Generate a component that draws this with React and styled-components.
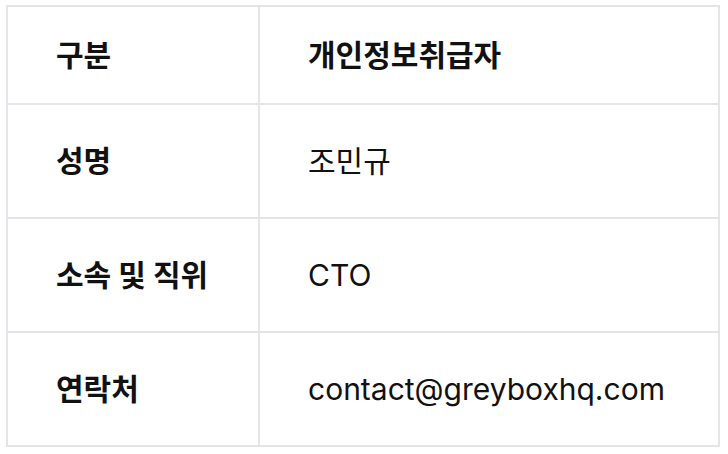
import React from "react";
import styled, { createGlobalStyle } from "styled-components";

const Global = createGlobalStyle`
  html, body { margin: 0; padding: 0; background: #ffffff; }
  body { font-family: Inter, "Noto Sans CJK KR", sans-serif; color: #111111; }
`;

const Page = styled.div`
  padding: 5px 0 0 6px;
`;

const Table = styled.table`
  border-collapse: collapse;
  width: 714px;
  table-layout: fixed;
  border: 2px solid #e4e4e9;
`;

const Col = styled.col`
  width: ${(p) => p.$w || "auto"};
`;

const Row = styled.tr`
  height: ${(p) => (p.$head ? "98px" : "114px")};
`;

const Cell = styled.td`
  border: 2px solid #e4e4e9;
  padding: 0 0 0 48px;
  font-size: 30px;
  line-height: 1.2;
  font-weight: ${(p) => (p.$bold ? 700 : 400)};
  color: #111111;
  vertical-align: middle;
  white-space: nowrap;
`;

const rows = [
  ["성명", "조민규"],
  ["소속 및 직위", "CTO"],
  ["연락처", "contact@greyboxhq.com"],
];

export default function App() {
  return (
    <Page>
      <Global />
      <Table>
        <colgroup>
          <Col $w="252px" />
          <Col />
        </colgroup>
        <tbody>
          <Row $head>
            <Cell $bold>구분</Cell>
            <Cell $bold>개인정보취급자</Cell>
          </Row>
          {rows.map(([k, v]) => (
            <Row key={k}>
              <Cell $bold>{k}</Cell>
              <Cell>{v}</Cell>
            </Row>
          ))}
        </tbody>
      </Table>
    </Page>
  );
}
